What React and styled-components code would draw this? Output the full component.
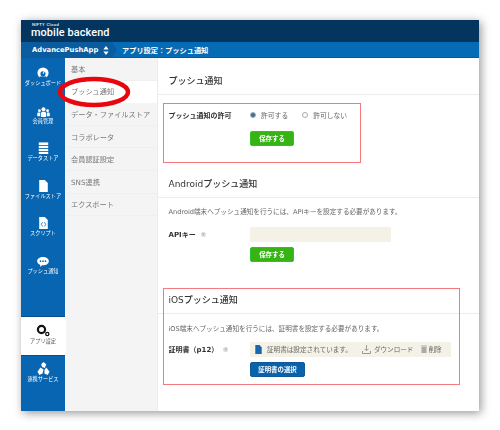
import React from 'react';
import styled, { createGlobalStyle } from 'styled-components';

const FONT = `"DejaVu Sans", "Noto Sans CJK JP", sans-serif`;
const JP = `"Noto Sans CJK JP", "Noto Sans", sans-serif`;

const Global = createGlobalStyle`
    html, body {
        margin: 0;
        padding: 0;
        background: #fff;
    }
    body {
        width: 500px;
        height: 430px;
        overflow: hidden;
        font-family: ${FONT};
    }
`;

const Page = styled.div`
    position: relative;
    width: 500px;
    height: 430px;
    padding: 20px 0 0 21px;
    box-sizing: border-box;
    overflow: hidden;
`;

const Window = styled.div`
    width: 458px;
    height: 391px;
    display: flex;
    flex-direction: column;
    background: #fff;
    box-shadow: 2px 2px 9px rgba(0, 0, 0, 0.42);
    filter: blur(0.35px);
`;

const TopBar = styled.div`
    height: 22px;
    flex: none;
    background: #04355f;
    color: #fff;
    padding: 3px 0 0 10px;
    box-sizing: border-box;
`;

const Nifty = styled.div`
    font: 700 4px/4px "Liberation Sans", sans-serif;
    letter-spacing: 0.3px;
    color: #dfe8f0;
    padding-left: 1px;
`;

const Logo = styled.div`
    font: 500 10.9px/12px Roboto, sans-serif;
    letter-spacing: 0.1px;
    white-space: nowrap;
`;

const CrumbBar = styled.div`
    height: 16px;
    flex: none;
    display: flex;
    align-items: center;
    background: #056bb5;
    color: #fff;
    font-size: 7.2px;
    font-weight: 700;
    box-shadow: inset 0 -1px 0 #0a5a98;
`;

const AppName = styled.div`
    position: relative;
    width: 91px;
    height: 100%;
    display: flex;
    align-items: center;
    gap: 5px;
    padding-left: 11px;
    box-sizing: border-box;
    background: #0b5c9f;
    white-space: nowrap;
    font-size: 6.8px;
    &::after {
        content: '';
        position: absolute;
        right: -5px;
        top: 0;
        border-left: 5px solid #0b5c9f;
        border-top: 8px solid transparent;
        border-bottom: 8px solid transparent;
    }
`;

const CrumbTitle = styled.div`
    margin-left: 10px;
`;

const Body = styled.div`
    flex: 1;
    display: flex;
    min-height: 0;
`;

const SideNav = styled.nav`
    width: 44px;
    flex: none;
    display: flex;
    flex-direction: column;
    background: #0765b1;
    padding-top: 7px;
    box-sizing: border-box;
`;

const NavItem = styled.div`
    height: 37.6px;
    flex: none;
    display: flex;
    flex-direction: column;
    align-items: center;
    color: #fff;
    font-family: ${JP};
    font-size: 5.2px;
    line-height: 8px;
    white-space: nowrap;
`;

const IconSlot = styled.div`
    height: 14px;
    display: flex;
    align-items: flex-end;
    svg {
        display: block;
    }
`;

const ActiveNavItem = styled(NavItem)`
    height: 38px;
    margin-top: 26.4px;
    padding-top: 6px;
    box-sizing: border-box;
    background: #fff;
    color: #555;
    box-shadow: 0 -1px 0 #0a4f8c, 0 1px 0 #0a4f8c;
`;

const LowerNavItem = styled(NavItem)`
    padding-top: 6px;
    box-sizing: border-box;
`;

const SubNav = styled.div`
    width: 92px;
    flex: none;
    margin-left: 1px;
    background: #f4f4f4;
    border-right: 1px solid #ececec;
    box-sizing: border-box;
`;

const SubItem = styled.div`
    height: 22.6px;
    display: flex;
    align-items: center;
    padding-left: 5px;
    font-size: 7.2px;
    white-space: nowrap;
    color: #777;
    background: ${p => (p.$active ? '#fff' : 'transparent')};
    border-bottom: 1px solid ${p => (p.$active ? '#fff' : '#efefef')};
    box-sizing: border-box;
`;

const Main = styled.main`
    flex: 1;
    padding-top: 16px;
    color: #333;
    min-width: 0;
`;

const Section = styled.section`
    margin-bottom: ${p => p.$gap}px;
`;

const Heading = styled.h2`
    margin: 0 0 ${p => p.$gap}px;
    height: 20px;
    padding-left: 10.5px;
    font-size: 9px;
    line-height: 14px;
    font-weight: 500;
    color: #333;
    border-bottom: 1px solid #ececec;
    white-space: nowrap;
`;

const Note = styled.p`
    margin: 0 0 ${p => p.$gap}px;
    padding-left: 10.5px;
    font-size: 6.6px;
    line-height: 9px;
    color: #666;
    white-space: nowrap;
`;

const Field = styled.div`
    display: grid;
    grid-template-columns: 81.5px 1fr;
    align-items: center;
    padding-left: 10.5px;
    margin-bottom: ${p => p.$gap}px;
    min-height: 15px;
`;

const Label = styled.label`
    display: flex;
    align-items: center;
    gap: 5px;
    font-size: 7px;
    font-weight: 700;
    color: #333;
    white-space: nowrap;
`;

const Help = styled.span`
    width: 5px;
    height: 5px;
    border-radius: 50%;
    background: #ddd;
    color: #888;
    font-size: 4px;
    line-height: 5px;
    text-align: center;
    font-weight: 400;
`;

const Options = styled.div`
    display: flex;
    align-items: center;
    font-size: 6.8px;
    color: #666;
    white-space: nowrap;
`;

const Radio = styled.span`
    width: 4px;
    height: 4px;
    margin-right: 5px;
    border-radius: 50%;
    border: 0.5px solid #aaa;
    background: ${p => (p.$on ? '#3a6f9f' : '#fff')};
`;

const RadioText = styled.span`
    margin-right: 14px;
`;

const Button = styled.button`
    display: block;
    margin: 0 0 0 81.5px;
    padding: 0;
    width: ${p => p.$width}px;
    height: 15px;
    border: 1px solid ${p => (p.$blue ? '#0c5a9c' : '#2ec22a')};
    border-radius: 2px;
    background: ${p => (p.$blue ? '#0a62ab' : '#35b414')};
    color: #fff;
    font-family: ${JP};
    font-size: 6.4px;
    font-weight: 700;
    box-sizing: border-box;
`;

const ButtonRow = styled.div`
    padding-left: 10.5px;
`;

const KeyInput = styled.div`
    width: 141px;
    height: 15px;
    background: #f4f2e6;
    border-radius: 1px;
`;

const CertBox = styled.div`
    width: 201px;
    height: 15px;
    display: flex;
    align-items: center;
    padding-left: 5px;
    box-sizing: border-box;
    background: #f4f2e6;
    border-radius: 1px;
    font-size: 6.6px;
    color: #666;
    white-space: nowrap;
`;

const CertItem = styled.span`
    display: flex;
    align-items: center;
    gap: ${p => p.$gap}px;
    margin-right: ${p => p.$right}px;
`;

const RedBox = styled.div`
    position: absolute;
    left: ${p => p.$x}px;
    top: ${p => p.$y}px;
    width: ${p => p.$w}px;
    height: ${p => p.$h}px;
    border: 1px solid #f47a7e;
    box-sizing: border-box;
`;

const Ellipse = styled.svg`
    position: absolute;
    left: 56px;
    top: 74px;
`;

const Updown = () => (
    <svg width="6" height="9" viewBox="0 0 6 9" fill="#fff">
        <path d="M3 0l2.6 3.4H.4zM3 9L.4 5.6h5.2z" />
    </svg>
);

const DashIcon = () => (
    <svg width="12" height="12" viewBox="0 0 14 14">
        <circle cx="7" cy="7" r="6.5" fill="#fff" />
        <circle cx="7" cy="8" r="3" fill="#0765b1" />
        <path d="M7 8l2-4" stroke="#fff" strokeWidth="1.2" />
        <rect x="3" y="11" width="8" height="3" fill="#0765b1" />
    </svg>
);

const UsersIcon = () => (
    <svg width="13" height="10" viewBox="0 0 15 12" fill="#fff">
        <circle cx="7.5" cy="2.8" r="2.4" />
        <path d="M4.5 12V7.400c0-1 .8-1.800 1.800-1.800h2.400c1 0 1.800.8 1.800 1.800V12z" />
        <circle cx="2.600" cy="4.400" r="1.700" />
        <path d="M0 11V8c0-.8.6-1.400 1.400-1.400h2.200V11z" />
        <circle cx="12.400" cy="4.400" r="1.700" />
        <path d="M15 11V8c0-.8-.6-1.400-1.400-1.400h-2.200V11z" />
    </svg>
);

const StoreIcon = () => (
    <svg width="11" height="12" viewBox="0 0 11 14" fill="#fff">
        <rect y="0.5" width="11" height="3" />
        <rect y="4.5" width="11" height="2.5" />
        <rect y="8" width="11" height="2.5" />
        <rect y="11.5" width="11" height="2.5" />
    </svg>
);

const FileIcon = ({ fill = '#fff', w = 9, h = 12 }) => (
    <svg width={w} height={h} viewBox="0 0 10 14" fill={fill}>
        <path d="M0 0h6.5L10 3.5V14H0z" />
    </svg>
);

const ScriptIcon = () => (
    <svg width="9" height="12" viewBox="0 0 10 14">
        <path d="M0 0h6.5L10 3.5V14H0z" fill="#fff" />
        <path d="M4 6L2.4 8.5 4 11M6 6l1.6 2.5L6 11" fill="none" stroke="#0765b1" strokeWidth="0.9" />
    </svg>
);

const BubbleIcon = () => (
    <svg width="12" height="10" viewBox="0 0 14 12">
        <path d="M7 0c3.9 0 7 2.2 7 5s-3.1 5-7 5l-1 0-2.5 2 .3-2.5C1.6 8.7 0 7 0 5c0-2.8 3.1-5 7-5z" fill="#fff" />
        <circle cx="4" cy="5" r="1" fill="#0765b1" />
        <circle cx="7" cy="5" r="1" fill="#0765b1" />
        <circle cx="10" cy="5" r="1" fill="#0765b1" />
    </svg>
);

const GearIcon = () => (
    <svg width="14" height="13" viewBox="0 0 14 13" fill="none" stroke="#111">
        <circle cx="5.5" cy="5.5" r="3.6" strokeWidth="2.2" />
        <circle cx="11.3" cy="10" r="1.6" strokeWidth="1.3" />
    </svg>
);

const LinkIcon = () => (
    <svg width="13" height="13" viewBox="0 0 13 14" fill="#fff">
        <path d="M6.5 0l3 2.5-1.5 4-3-1-1-3z" />
        <path d="M3.2 6l3.3 2-1 4.5L2 14 0 10.5z" />
        <path d="M9.5 6L13 10.5 11 14l-3.500-1.500 0-4z" />
    </svg>
);

const DownloadIcon = () => (
    <svg width="9" height="9" viewBox="0 0 9 9" fill="none" stroke="#999">
        <path d="M4.5 0v5.500M2.500 3.800l2 2 2-2M.5 6v2.500h8V6" />
    </svg>
);

const TrashIcon = () => (
    <svg width="6" height="8" viewBox="0 0 6 8" fill="#aaa">
        <rect y="0.5" width="6" height="1" />
        <rect x="0.5" y="2" width="5" height="6" />
    </svg>
);

const navItems = [
    { label: 'ダッシュボード', icon: <DashIcon /> },
    { label: '会員管理', icon: <UsersIcon /> },
    { label: 'データストア', icon: <StoreIcon /> },
    { label: 'ファイルストア', icon: <FileIcon /> },
    { label: 'スクリプト', icon: <ScriptIcon /> },
    { label: 'プッシュ通知', icon: <BubbleIcon /> },
];

const subItems = ['基本', 'プッシュ通知', 'データ・ファイルストア', 'コラボレータ', '会員認証設定', 'SNS連携', 'エクスポート'];

const App = () => (
    <Page>
        <Global />
        <Window>
            <TopBar>
                <Nifty>NIFTY Cloud</Nifty>
                <Logo>mobile backend</Logo>
            </TopBar>
            <CrumbBar>
                <AppName>
                    AdvancePushApp
                    <Updown />
                </AppName>
                <CrumbTitle>アプリ設定：プッシュ通知</CrumbTitle>
            </CrumbBar>
            <Body>
                <SideNav>
                    {navItems.map(item => (
                        <NavItem key={item.label}>
                            <IconSlot>{item.icon}</IconSlot>
                            {item.label}
                        </NavItem>
                    ))}
                    <ActiveNavItem>
                        <IconSlot><GearIcon /></IconSlot>
                        アプリ設定
                    </ActiveNavItem>
                    <LowerNavItem>
                        <IconSlot><LinkIcon /></IconSlot>
                        連携サービス
                    </LowerNavItem>
                </SideNav>
                <SubNav>
                    {subItems.map((item, i) => (
                        <SubItem key={item} $active={i === 1}>
                            {item}
                        </SubItem>
                    ))}
                </SubNav>
                <Main>
                    <Section $gap={31}>
                        <Heading $gap={12}>プッシュ通知</Heading>
                        <Field $gap={9}>
                            <Label>プッシュ通知の許可</Label>
                            <Options>
                                <Radio $on />
                                <RadioText>許可する</RadioText>
                                <Radio />
                                <span>許可しない</span>
                            </Options>
                        </Field>
                        <ButtonRow>
                            <Button $width={44}>保存する</Button>
                        </ButtonRow>
                    </Section>
                    <Section $gap={31}>
                        <Heading $gap={10}>Androidプッシュ通知</Heading>
                        <Note $gap={9.5}>Android端末へプッシュ通知を行うには、APIキーを設定する必要があります。</Note>
                        <Field $gap={5}>
                            <Label>APIキー<Help>?</Help></Label>
                            <KeyInput />
                        </Field>
                        <ButtonRow>
                            <Button $width={44}>保存する</Button>
                        </ButtonRow>
                    </Section>
                    <Section $gap={0}>
                        <Heading $gap={11.5}>iOSプッシュ通知</Heading>
                        <Note $gap={7.5}>iOS端末へプッシュ通知を行うには、証明書を設定する必要があります。</Note>
                        <Field $gap={5}>
                            <Label>証明書（p12）<Help>?</Help></Label>
                            <CertBox>
                                <CertItem $gap={5} $right={10}>
                                    <FileIcon fill="#1668b0" w={7} h={9} />
                                    証明書は設定されています。
                                </CertItem>
                                <CertItem $gap={3} $right={8}>
                                    <DownloadIcon />
                                    ダウンロード
                                </CertItem>
                                <CertItem $gap={1} $right={0}>
                                    <TrashIcon />
                                    削除
                                </CertItem>
                            </CertBox>
                        </Field>
                        <ButtonRow>
                            <Button $blue $width={55}>証明書の選択</Button>
                        </ButtonRow>
                    </Section>
                </Main>
            </Body>
        </Window>
        <RedBox $x={163} $y={103} $w={198} $h={60} />
        <RedBox $x={163} $y={288} $w={297} $h={97} />
        <Ellipse width="76" height="38" viewBox="0 0 76 38">
            <ellipse cx="38" cy="18" rx="34" ry="13" fill="none" stroke="#e8060f" strokeWidth="4.5" />
        </Ellipse>
    </Page>
);

export default App;
